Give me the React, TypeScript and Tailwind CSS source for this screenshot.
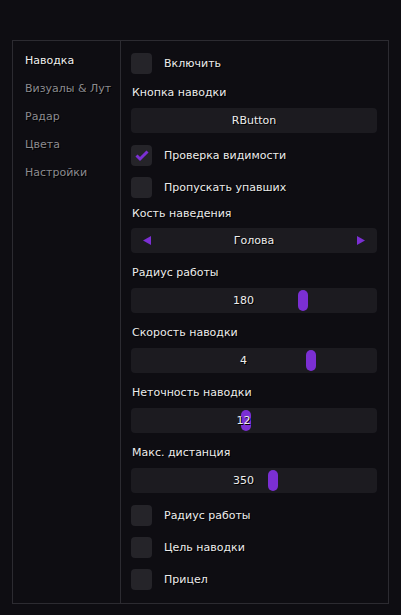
import React from 'react';

const tabs = ['Наводка', 'Визуалы & Лут', 'Радар', 'Цвета', 'Настройки'];

const txt = 'text-[11px] leading-[14px] text-[#ececec] [text-shadow:1px_1px_0_#000]';

function Check({ label, checked, className = '' }: { label: string; checked?: boolean; className?: string }) {
  return (
    <div className={`flex items-center h-[21px] ${className}`}>
      <div className="w-[21px] h-[21px] rounded-[4px] bg-[#252429] flex items-center justify-center">
        {checked && (
          <svg width="14" height="12" viewBox="0 0 14 12">
            <polyline points="1.5,5.5 5,9 12.5,1.5" fill="none" stroke="#7b2fd3" strokeWidth="3" />
          </svg>
        )}
      </div>
      <span className={`ml-[12px] ${txt}`}>{label}</span>
    </div>
  );
}

function Label({ text, className = '' }: { text: string; className?: string }) {
  return <div className={`h-[14px] ${txt} ${className}`}>{text}</div>;
}

function Slider({ value, thumb, className = '' }: { value: string; thumb: number; className?: string }) {
  return (
    <div className={`relative h-[25px] rounded-[4px] bg-[#1c1b20] flex items-center justify-center pr-[21px] ${className}`}>
      <div
        className="absolute top-[2px] w-[10px] h-[21px] rounded-full bg-[#7b2fd3]"
        style={{ left: thumb }}
      />
      <span className={`relative ${txt}`}>{value}</span>
    </div>
  );
}

export default function App() {
  return (
    <div className="w-[401px] h-[615px] bg-[#0e0d12] pt-[40px] pl-[12px]" style={{ fontFamily: '"DejaVu Sans", sans-serif' }}>
      <div className="w-[377px] h-[564px] border border-[#2c2b31] flex">
        {/* sidebar */}
        <div className="w-[108px] border-r border-[#2c2b31] pt-[13px] pl-[12px] flex flex-col gap-[14px]">
          {tabs.map((t, i) => (
            <div
              key={t}
              className={`h-[14px] text-[11px] leading-[14px] [text-shadow:1px_1px_0_#000] ${i === 0 ? 'text-[#f0f0f0]' : 'text-[#8c8b90]'}`}
            >
              {t}
            </div>
          ))}
        </div>

        {/* content */}
        <div className="flex-1 pt-[12px] pl-[10px] pr-[11px] flex flex-col">
          <Check label="Включить" />
          <Label text="Кнопка наводки" className="mt-[12px] ml-[1px]" />
          <div className="mt-[8px] h-[25px] rounded-[4px] bg-[#1c1b20] flex items-center justify-center">
            <span className={txt}>RButton</span>
          </div>
          <Check label="Проверка видимости" checked className="mt-[12px]" />
          <Check label="Пропускать упавших" className="mt-[11px]" />
          <Label text="Кость наведения" className="mt-[9px] ml-[1px]" />
          <div className="mt-[7px] h-[25px] rounded-[4px] bg-[#1c1b20] flex items-center justify-between px-[12px]">
            <svg width="8" height="9" viewBox="0 0 8 9"><polygon points="8,0 8,9 0,4.5" fill="#7b2fd3" /></svg>
            <span className={txt}>Голова</span>
            <svg width="8" height="9" viewBox="0 0 8 9"><polygon points="0,0 0,9 8,4.5" fill="#7b2fd3" /></svg>
          </div>
          <Label text="Радиус работы" className="mt-[13px] ml-[1px]" />
          <Slider value="180" thumb={167} className="mt-[8px]" />
          <Label text="Скорость наводки" className="mt-[13px] ml-[1px]" />
          <Slider value="4" thumb={175} className="mt-[8px]" />
          <Label text="Неточность наводки" className="mt-[13px] ml-[1px]" />
          <Slider value="12" thumb={110} className="mt-[8px]" />
          <Label text="Макс. дистанция" className="mt-[13px] ml-[1px]" />
          <Slider value="350" thumb={137} className="mt-[8px]" />
          <Check label="Радиус работы" className="mt-[12px]" />
          <Check label="Цель наводки" className="mt-[11px]" />
          <Check label="Прицел" className="mt-[11px]" />
        </div>
      </div>
    </div>
  );
}
